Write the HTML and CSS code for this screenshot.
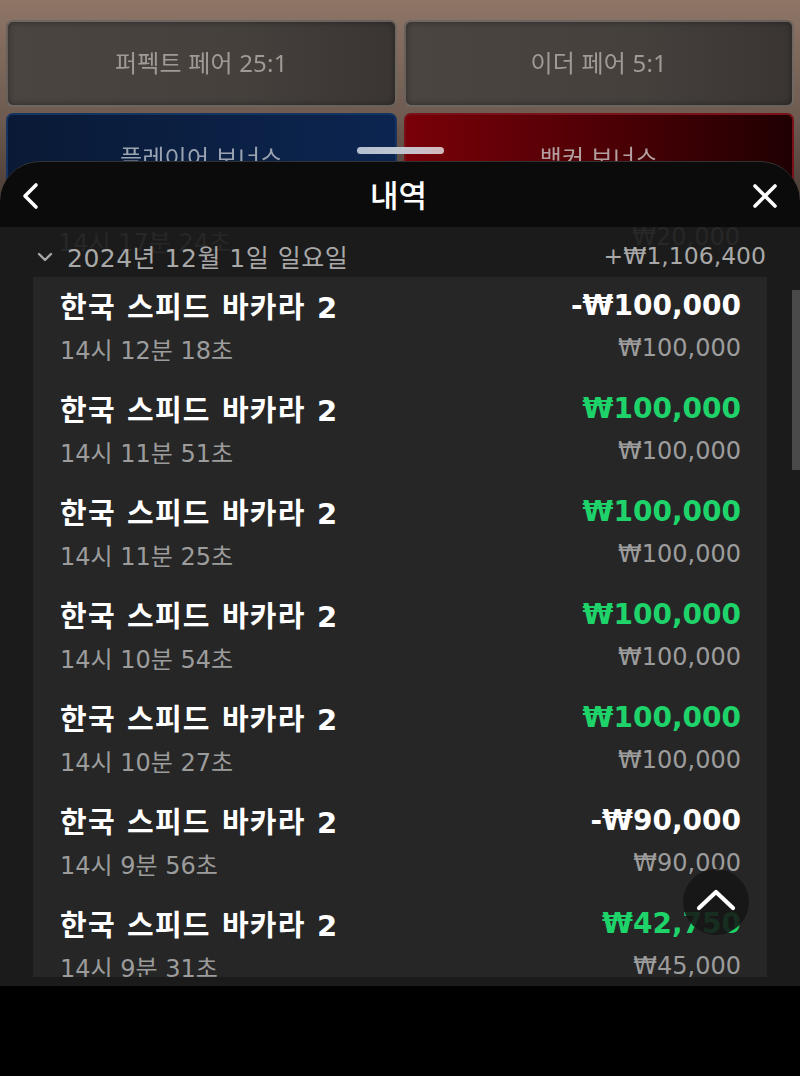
FILE: index.html
```html
<!DOCTYPE html>
<html lang="ko">
<head>
<meta charset="utf-8">
<title>내역</title>
<link rel="stylesheet" href="styles.css">
</head>
<body>
<div class="screen">
  <div class="game">
    <div class="bets">
      <div class="bet bet-gray">퍼펙트 페어 25:1</div>
      <div class="bet bet-gray">이더 페어 5:1</div>
      <div class="bet bet-blue">플레이어 보너스</div>
      <div class="bet bet-red">뱅커 보너스</div>
    </div>
  </div>
  <div class="handle"></div>

  <div class="sheet">
    <div class="sheet-head">
      <svg class="icon back" width="24" height="32" viewBox="0 0 24 32"><polyline points="16,5 5,16 16,27" fill="none" stroke="#fff" stroke-width="3.6" stroke-linecap="round" stroke-linejoin="round"/></svg>
      <div class="title">내역</div>
      <svg class="icon close" width="32" height="32" viewBox="0 0 32 32"><path d="M6 6 L26 26 M26 6 L6 26" fill="none" stroke="#fff" stroke-width="3.6" stroke-linecap="round"/></svg>
    </div>
    <div class="content">
      <div class="daterow">
        <div class="ghost"><span>14시 17분 24초</span><span>₩20,000</span></div>
        <div class="date">
          <svg class="chev" width="16" height="12" viewBox="0 0 16 12"><polyline points="2,3 8,9 14,3" fill="none" stroke="#a8a8a8" stroke-width="2.4" stroke-linecap="round" stroke-linejoin="round"/></svg>
          <span>2024년 12월 1일 일요일</span>
        </div>
        <div class="total">+₩1,106,400</div>
      </div>
      <div class="listwrap">
        <div class="list">
          <div class="item">
            <div class="row"><span class="name">한국 스피드 바카라 2</span><span class="amt">-₩100,000</span></div>
            <div class="row sub"><span>14시 12분 18초</span><span>₩100,000</span></div>
          </div>
          <div class="item">
            <div class="row"><span class="name">한국 스피드 바카라 2</span><span class="amt win">₩100,000</span></div>
            <div class="row sub"><span>14시 11분 51초</span><span>₩100,000</span></div>
          </div>
          <div class="item">
            <div class="row"><span class="name">한국 스피드 바카라 2</span><span class="amt win">₩100,000</span></div>
            <div class="row sub"><span>14시 11분 25초</span><span>₩100,000</span></div>
          </div>
          <div class="item">
            <div class="row"><span class="name">한국 스피드 바카라 2</span><span class="amt win">₩100,000</span></div>
            <div class="row sub"><span>14시 10분 54초</span><span>₩100,000</span></div>
          </div>
          <div class="item">
            <div class="row"><span class="name">한국 스피드 바카라 2</span><span class="amt win">₩100,000</span></div>
            <div class="row sub"><span>14시 10분 27초</span><span>₩100,000</span></div>
          </div>
          <div class="item">
            <div class="row"><span class="name">한국 스피드 바카라 2</span><span class="amt">-₩90,000</span></div>
            <div class="row sub"><span>14시 9분 56초</span><span>₩90,000</span></div>
          </div>
          <div class="item">
            <div class="row"><span class="name">한국 스피드 바카라 2</span><span class="amt win">₩42,750</span></div>
            <div class="row sub"><span>14시 9분 31초</span><span>₩45,000</span></div>
          </div>
        </div>
      </div>
      <div class="scrollbar"></div>
      <div class="totop">
        <svg width="40" height="24" viewBox="0 0 40 24"><polyline points="3,20 20,4 37,20" fill="none" stroke="#fff" stroke-width="4.2" stroke-linecap="round" stroke-linejoin="round"/></svg>
      </div>
    </div>
  </div>
</div>
</body>
</html>
```

FILE: styles.css
```css
* { box-sizing: border-box; }
html, body { margin: 0; padding: 0; background: #000; }
body {
  font-family: "DejaVu Sans", "Noto Sans CJK KR", sans-serif;
  width: 800px;
  height: 1076px;
  overflow: hidden;
}
.screen {
  position: relative;
  width: 800px;
  height: 1076px;
  background: #000;
}
.game {
  height: 200px;
  background: linear-gradient(180deg, #8e7566 0%, #6d5a50 60%, #4a3c36 100%);
  padding: 20px 6px 0;
  filter: blur(0.6px);
  font-family: "Noto Sans", "Noto Sans CJK KR", sans-serif;
}
.bets {
  display: grid;
  grid-template-columns: 1fr 1fr;
  column-gap: 7px;
  row-gap: 6px;
}
.bet {
  height: 87px;
  border-radius: 7px;
  display: flex;
  align-items: center;
  justify-content: center;
  font-size: 24px;
  color: #a09a95;
  letter-spacing: 0.2px;
  padding-bottom: 4px;
}
.bet-gray {
  background: linear-gradient(90deg, #4b4541 0%, #45403c 60%, #3a3532 100%);
  border: 2px solid rgba(140, 132, 125, 0.55);
  box-shadow: inset 0 0 6px rgba(0,0,0,0.4);
}
.bet-blue {
  height: 80px;
  background: linear-gradient(90deg, #0a1a36 0%, #0c2550 100%);
  border: 2px solid #153460;
  color: #9aa3b0;
  align-items: flex-start;
  padding-top: 24px;
}
.bet-red {
  height: 80px;
  background: linear-gradient(90deg, #7a0008 0%, #4a0005 55%, #200002 100%);
  border: 2px solid #7a1018;
  color: #b3a0a0;
  align-items: flex-start;
  padding-top: 24px;
}
.handle {
  position: absolute;
  left: 357px;
  top: 147px;
  width: 87px;
  height: 7px;
  border-radius: 4px;
  background: linear-gradient(90deg, #b3bfd0 0%, #c0c6d0 50%, #d4b8bc 100%);
}
.sheet {
  position: absolute;
  left: 0;
  right: 0;
  top: 161px;
  height: 825px;
  background: #0b0b0b;
  border-radius: 40px 40px 0 0;
  border-top: 1px solid rgba(255,255,255,0.16);
  display: flex;
  flex-direction: column;
  overflow: hidden;
}
.sheet-head {
  height: 65px;
  display: flex;
  align-items: center;
  justify-content: space-between;
  padding: 0 19px 0 20px;
  flex: none;
}
.icon { display: block; }
.back { margin-top: 3px; }
.close { margin-top: 3px; }
.title {
  color: #fff;
  font-size: 31px;
  font-family: "Noto Sans CJK KR", sans-serif;
  font-weight: 500;
  margin-top: -2px;
  margin-left: 4px;
}
.content {
  position: relative;
  flex: 1;
  background: #1b1b1b;
  display: flex;
  flex-direction: column;
  padding-bottom: 9px;
  overflow: hidden;
}
.daterow {
  position: relative;
  height: 50px;
  flex: none;
  display: flex;
  align-items: center;
  justify-content: space-between;
  padding: 8px 34px 0 37px;
  overflow: hidden;
}
.ghost {
  position: absolute;
  left: 58px;
  right: 60px;
  top: -4px;
  display: flex;
  justify-content: space-between;
  font-size: 24px;
  color: #272727;
}
.date {
  position: relative;
  display: flex;
  align-items: center;
  gap: 14px;
  font-size: 25px;
  letter-spacing: 0.5px;
  color: #a8a8a8;
}
.chev { margin-top: 2px; }
.total {
  position: relative;
  font-size: 23.5px;
  color: #a8a8a8;
}
.listwrap {
  flex: 1;
  margin: 0 33px;
  overflow: hidden;
  background: #262626;
}
.item {
  padding: 8px 26px 9px 27px;
  height: 103px;
}
.row {
  display: flex;
  justify-content: space-between;
  align-items: center;
  height: 40px;
}
.name {
  color: #fff;
  font-size: 29px;
  font-weight: 700;
  letter-spacing: 1.2px;
}
.amt {
  color: #fff;
  font-size: 28px;
  font-weight: 700;
}
.amt.win { color: #1fd36b; }
.sub {
  height: 46px;
  font-size: 24px;
  color: #9c9c9c;
}
.scrollbar {
  position: absolute;
  right: 0;
  top: 63px;
  width: 8px;
  height: 180px;
  background: #4a4a4a;
}
.totop {
  position: absolute;
  left: 683px;
  top: 642px;
  width: 66px;
  height: 66px;
  border-radius: 50%;
  background: rgba(22, 22, 22, 0.88);
  display: flex;
  align-items: center;
  justify-content: center;
}
.totop svg { margin-top: -4px; }
```
